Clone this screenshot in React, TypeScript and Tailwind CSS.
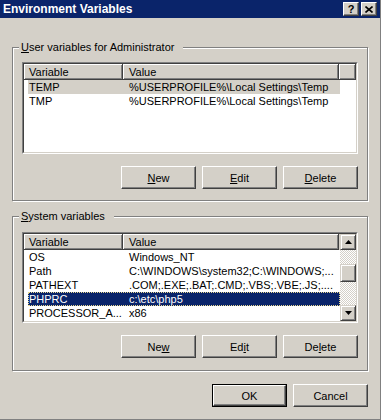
import React from "react";

type Row = { name: string; value: string };

const userVars: Row[] = [
  { name: "TEMP", value: "%USERPROFILE%\\Local Settings\\Temp" },
  { name: "TMP", value: "%USERPROFILE%\\Local Settings\\Temp" },
];

const systemVars: Row[] = [
  { name: "OS", value: "Windows_NT" },
  { name: "Path", value: "C:\\WINDOWS\\system32;C:\\WINDOWS;..." },
  { name: "PATHEXT", value: ".COM;.EXE;.BAT;.CMD;.VBS;.VBE;.JS;...." },
  { name: "PHPRC", value: "c:\\etc\\php5" },
  { name: "PROCESSOR_A...", value: "x86" },
];

const raised =
  "border border-t-white border-l-white border-r-[#404040] border-b-[#404040] shadow-[inset_-1px_-1px_0_#808080]";

const Button: React.FC<React.PropsWithChildren<{ isDefault?: boolean }>> = ({ children, isDefault }) => {
  if (isDefault) {
    return (
      <div className="w-[75px] h-[23px] border border-black flex">
        <div className={`flex-1 flex items-center justify-center ${raised}`}>{children}</div>
      </div>
    );
  }
  return <div className={`w-[75px] h-[23px] flex items-center justify-center ${raised}`}>{children}</div>;
};

const HeaderCell: React.FC<React.PropsWithChildren<{ className?: string }>> = ({ children, className }) => (
  <div
    className={`h-full flex items-center border-r border-b border-[#404040] shadow-[inset_1px_1px_0_#fff,inset_-1px_-1px_0_#808080] ${className ?? ""}`}
  >
    {children}
  </div>
);

const Arrow = ({ up }: { up?: boolean }) => (
  <svg width="7" height="4" viewBox="0 0 7 4">
    <polygon points={up ? "3.5,0 7,4 0,4" : "0,0 7,0 3.5,4"} fill="#000" />
  </svg>
);

const ScrollButton = ({ up }: { up?: boolean }) => (
  <div className="h-[16px] flex items-center justify-center border border-t-[#d4d0c8] border-l-[#d4d0c8] border-r-[#404040] border-b-[#404040] bg-[#d4d0c8] shadow-[inset_1px_1px_0_#fff,inset_-1px_-1px_0_#808080]">
    <Arrow up={up} />
  </div>
);

const ListView = ({
  rows,
  selected,
  focused,
  scroll,
  height,
}: {
  rows: Row[];
  selected: number;
  focused: boolean;
  scroll?: boolean;
  height: string;
}) => (
  <div className={`${height} border border-t-[#808080] border-l-[#808080] border-r-white border-b-white`}>
    <div className="h-full flex border border-t-[#404040] border-l-[#404040] border-r-[#d4d0c8] border-b-[#d4d0c8] bg-white overflow-hidden">
      <div className="flex-1 flex flex-col min-w-0">
        <div className="h-[16px] flex shrink-0 bg-[#d4d0c8]">
          <HeaderCell className="w-[99px] pl-[5px]">Variable</HeaderCell>
          <HeaderCell className="w-[216px] pl-[6px]">Value</HeaderCell>
          {!scroll && <HeaderCell className="flex-1" />}
        </div>
        <div className="flex flex-col">
          {rows.map((r, i) => {
            const sel = i === selected;
            const bg = sel ? (focused ? "bg-[#0a246a] text-white" : "bg-[#d4d0c8]") : "";
            return (
              <div key={r.name} className="h-[14px] flex pl-[4px] shrink-0">
                <div
                  className={`w-[312px] flex whitespace-nowrap ${bg} ${
                    sel && focused ? "outline outline-1 outline-dotted outline-[#e8d890] -outline-offset-1" : ""
                  }`}
                >
                  <div className="w-[95px] pl-[1px] overflow-hidden">{r.name}</div>
                  <div className="flex-1 pl-[6px] overflow-hidden">{r.value}</div>
                </div>
              </div>
            );
          })}
        </div>
      </div>
      {scroll && (
        <div className="w-[16px] flex flex-col shrink-0">
          <ScrollButton up />
          <div className="flex-1 [background:repeating-conic-gradient(#fff_0%_25%,#d4d0c8_0%_50%)_0_0/2px_2px]">
            <div className="mt-[14px] h-[18px] bg-[#d4d0c8] border border-t-[#d4d0c8] border-l-[#d4d0c8] border-r-[#404040] border-b-[#404040] shadow-[inset_1px_1px_0_#fff,inset_-1px_-1px_0_#808080]" />
          </div>
          <ScrollButton />
        </div>
      )}
    </div>
  </div>
);

const Group: React.FC<React.PropsWithChildren<{ label: React.ReactNode; className?: string }>> = ({
  label,
  children,
  className,
}) => (
  <fieldset
    className={`border border-[#808080] shadow-[inset_1px_1px_0_#fff,1px_1px_0_#fff] ${className ?? ""}`}
  >
    <legend className="ml-[6px] pl-[2px] pr-[9px] leading-[13px] bg-[#d4d0c8]">{label}</legend>
    {children}
  </fieldset>
);

export default function App() {
  return (
    <div className="w-[381px] h-[420px] bg-[#d4d0c8] flex flex-col border-r border-b border-[#808080] text-[11px] leading-[14px] text-black font-['Liberation_Sans',Arial,sans-serif]">
      <div className="h-[18px] shrink-0 flex items-center bg-[#0a246a] pl-[3px] pr-[3px] gap-[2px]">
        <div className="flex-1 text-white font-bold text-[12px]">Environment Variables</div>
        <div className={`w-[16px] h-[14px] flex items-center justify-center bg-[#d4d0c8] ${raised} font-bold text-[11px]`}>
          ?
        </div>
        <div className={`w-[16px] h-[14px] flex items-center justify-center bg-[#d4d0c8] ${raised}`}>
          <svg width="8" height="7" viewBox="0 0 8 7">
            <path d="M0.5 0.5 L7.5 6.5 M7.5 0.5 L0.5 6.5" stroke="#000" strokeWidth="1.6" />
          </svg>
        </div>
      </div>

      <div className="flex flex-col px-[12px]">
        <Group
          className="mt-[23px]"
          label={
            <>
              <u>U</u>ser variables for Administrator
            </>
          }
        >
          <div className="px-[9px] pt-[8px] pb-[11px] flex flex-col">
            <ListView rows={userVars} selected={0} focused={false} height="h-[92px]" />
            <div className="mt-[12px] flex justify-end gap-[6px]">
              <Button>
                <u>N</u>ew
              </Button>
              <Button>
                <u>E</u>dit
              </Button>
              <Button>
                <u>D</u>elete
              </Button>
            </div>
          </div>
        </Group>

        <Group
          className="mt-[9px]"
          label={
            <>
              <u>S</u>ystem variables
            </>
          }
        >
          <div className="px-[9px] pt-[9px] pb-[12px] flex flex-col">
            <ListView rows={systemVars} selected={3} focused scroll height="h-[91px]" />
            <div className="mt-[12px] flex justify-end gap-[6px]">
              <Button>
                Ne<u>w</u>
              </Button>
              <Button>
                Ed<u>i</u>t
              </Button>
              <Button>
                De<u>l</u>ete
              </Button>
            </div>
          </div>
        </Group>

        <div className="mt-[13px] flex justify-end gap-[6px]">
          <Button isDefault>OK</Button>
          <Button>Cancel</Button>
        </div>
      </div>
    </div>
  );
}
